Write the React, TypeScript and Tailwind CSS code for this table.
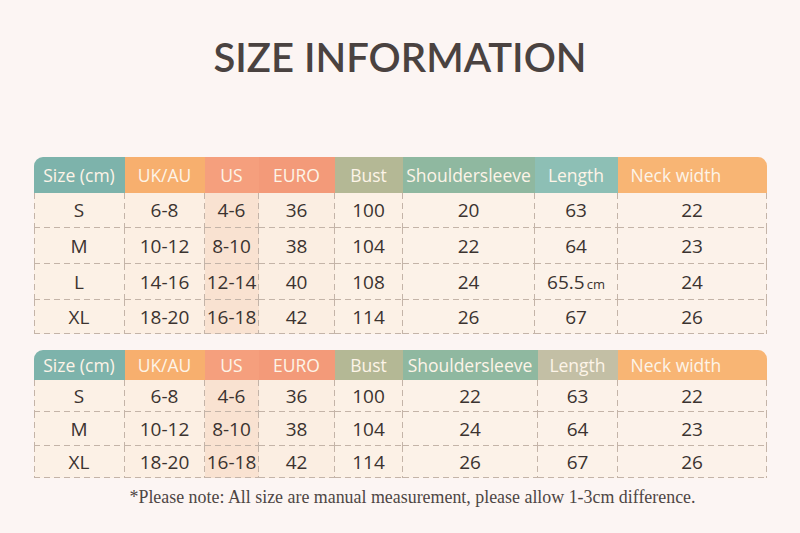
import React from "react";

type Col = { label: string; head: string; body: string };

const cols1: Col[] = [
  { label: "Size (cm)", head: "bg-[#7db3ab]", body: "bg-[#fcf1e6]" },
  { label: "UK/AU", head: "bg-[#f7af6e]", body: "bg-[#fcefe3]" },
  { label: "US", head: "bg-[#f59f7d]", body: "bg-[#f9e2d1]" },
  { label: "EURO", head: "bg-[#f39a79]", body: "bg-[#fbeee2]" },
  { label: "Bust", head: "bg-[#b4b895]", body: "bg-[#fcf1e6]" },
  { label: "Shouldersleeve", head: "bg-[#8fb8a0]", body: "bg-[#fcf2e8]" },
  { label: "Length", head: "bg-[#8dbfb5]", body: "bg-[#fcf2e9]" },
  { label: "Neck width", head: "bg-[#f8b574]", body: "bg-[#fcf2ea]" },
];

const cols2: Col[] = [
  cols1[0],
  cols1[1],
  cols1[2],
  cols1[3],
  cols1[4],
  cols1[5],
  { label: "Length", head: "bg-[#c3bfa5]", body: "bg-[#fcf2e9]" },
  cols1[7],
];

const rows1 = [
  ["S", "6-8", "4-6", "36", "100", "20", "63", "22"],
  ["M", "10-12", "8-10", "38", "104", "22", "64", "23"],
  ["L", "14-16", "12-14", "40", "108", "24", "65.5|cm", "24"],
  ["XL", "18-20", "16-18", "42", "114", "26", "67", "26"],
];

const rows2 = [
  ["S", "6-8", "4-6", "36", "100", "22", "63", "22"],
  ["M", "10-12", "8-10", "38", "104", "24", "64", "23"],
  ["XL", "18-20", "16-18", "42", "114", "26", "67", "26"],
];

const dash =
  "bg-[repeating-linear-gradient(90deg,#c4b4a8_0_6px,transparent_6px_10px),repeating-linear-gradient(180deg,#c4b4a8_0_6px,transparent_6px_10px)] bg-[length:100%_1px,1px_100%] bg-[position:left_bottom,right_top] bg-no-repeat";
const dashFirst =
  "bg-[repeating-linear-gradient(90deg,#c4b4a8_0_6px,transparent_6px_10px),repeating-linear-gradient(180deg,#c4b4a8_0_6px,transparent_6px_10px),repeating-linear-gradient(180deg,#c4b4a8_0_6px,transparent_6px_10px)] bg-[length:100%_1px,1px_100%,1px_100%] bg-[position:left_bottom,right_top,left_top] bg-no-repeat";

function Cell({ v }: { v: string }) {
  if (v.includes("|")) {
    const [a, b] = v.split("|");
    return (
      <span>
        {a}
        <span className="text-[13px] ml-[2px]">{b}</span>
      </span>
    );
  }
  return <span>{v}</span>;
}

function Table({
  cols,
  rows,
  grid,
  headH,
  rowHs,
}: {
  cols: Col[];
  rows: string[][];
  grid: string;
  headH: string;
  rowHs: string[];
}) {
  return (
    <div className="w-[733px]">
      <div className={`grid ${grid} ${headH} rounded-t-[9px] overflow-hidden`}>
        {cols.map((c, i) => (
          <div
            key={i}
            className={`${c.head} ${
              i === 7 ? "pl-[13px]" : "justify-center"
            } flex items-center text-[17.5px] text-[#fdf4e8] whitespace-nowrap`}
          >
            {c.label}
          </div>
        ))}
      </div>
      {rows.map((r, ri) => (
        <div key={ri} className={`grid ${grid} ${rowHs[ri]}`}>
          {r.map((v, ci) => (
            <div
              key={ci}
              className={`${cols[ci].body} ${
                ci === 0 ? dashFirst : dash
              } flex items-center justify-center text-[19px] text-[#3b3330]`}
            >
              <Cell v={v} />
            </div>
          ))}
        </div>
      ))}
    </div>
  );
}

export default function App() {
  return (
    <div
      className="w-[800px] h-[533px] bg-[#fcf5f3] flex flex-col items-center overflow-hidden"
      style={{ fontFamily: '"Open Sans", "Noto Sans", sans-serif' }}
    >
      <h1
        className="mt-[33px] h-[48px] flex items-center text-[40px] font-semibold text-[#4a4240] leading-none"
        style={{ fontFamily: 'Lato, "Noto Sans", sans-serif' }}
      >
        SIZE INFORMATION
      </h1>
      <div className="mt-[76px]">
        <Table
          cols={cols1}
          rows={rows1}
          grid="grid-cols-[91px_80px_54px_76px_68px_132px_83px_149px]"
          headH="h-[36px]"
          rowHs={["h-[35px]", "h-[36px]", "h-[36px]", "h-[34px]"]}
        />
      </div>
      <div className="mt-[16px]">
        <Table
          cols={cols2}
          rows={rows2}
          grid="grid-cols-[91px_80px_54px_76px_68px_135px_80px_149px]"
          headH="h-[30px]"
          rowHs={["h-[32px]", "h-[34px]", "h-[32px]"]}
        />
      </div>
      <p
        className="mt-[6px] ml-[25px] text-[17.9px] text-[#4e4644]"
        style={{ fontFamily: '"Liberation Serif", "DejaVu Serif", serif' }}
      >
        *Please note: All size are manual measurement, please allow 1-3cm difference.
      </p>
    </div>
  );
}
